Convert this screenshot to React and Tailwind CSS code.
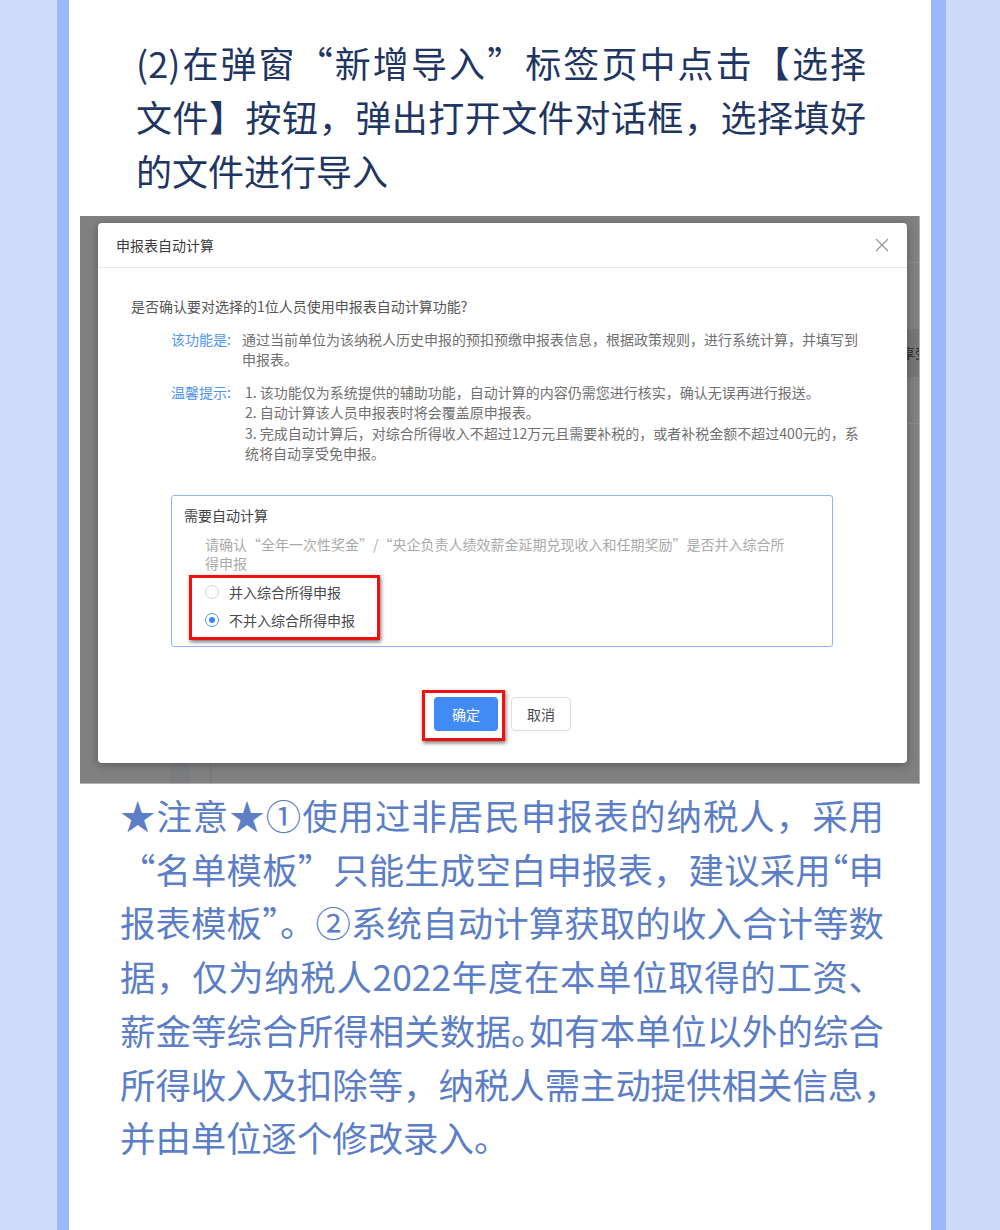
import React from "react";

const H = ({ children }) => (
  <span className="[font-feature-settings:'halt']">{children}</span>
);

const JLine = ({ children }) => (
  <div className="whitespace-nowrap text-justify [text-align-last:justify]">{children}</div>
);
const LLine = ({ children }) => <div className="whitespace-nowrap">{children}</div>;

function Radio({ checked, label }) {
  return (
    <div className="flex h-[28px] items-center">
      <span
        className={
          checked
            ? "flex h-[14px] w-[14px] items-center justify-center rounded-full border border-[#4a8ff5] bg-white"
            : "h-[14px] w-[14px] rounded-full border border-[#d4d4d4] bg-white"
        }
      >
        {checked && <span className="h-[6px] w-[6px] rounded-full bg-[#3f89f3]" />}
      </span>
      <span className="ml-[10px] text-[#4a4a4a]">{label}</span>
    </div>
  );
}

function Dialog() {
  return (
    <div className="relative w-[809px] rounded-[4px] bg-white text-[14px] leading-[20px] shadow-[0_2px_10px_rgba(0,0,0,0.3)]">
      <div className="flex h-[45px] items-center justify-between border-b border-[#e6e6e6] pl-[18px] pr-[18px]">
        <span className="text-[#3a3a3a]">申报表自动计算</span>
        <svg width="14" height="14" viewBox="0 0 14 14">
          <path d="M1 1L13 13M13 1L1 13" stroke="#9a9a9a" strokeWidth="1.3" fill="none" />
        </svg>
      </div>
      <div className="pb-[32px] pl-[33px] pt-[28px]">
        <div className="text-[#555]">是否确认要对选择的1位人员使用申报表自动计算功能?</div>
        <div className="mt-[13px] flex pl-[40px]">
          <div className="w-[71px] shrink-0 text-[#4d94ef]">该功能是:</div>
          <div className="text-[#707070]">
            <LLine>通过当前单位为该纳税人历史申报的预扣预缴申报表信息，根据政策规则，进行系统计算，并填写到</LLine>
            <LLine>申报表。</LLine>
          </div>
        </div>
        <div className="mt-[13px] flex pl-[40px]">
          <div className="w-[74px] shrink-0 text-[#4d94ef]">温馨提示:</div>
          <div className="leading-[20.3px] text-[#707070]">
            <LLine>1. 该功能仅为系统提供的辅助功能，自动计算的内容仍需您进行核实，确认无误再进行报送。</LLine>
            <LLine>2. 自动计算该人员申报表时将会覆盖原申报表。</LLine>
            <LLine>3. 完成自动计算后，对综合所得收入不超过12万元且需要补税的，或者补税金额不超过400元的，系</LLine>
            <LLine>统将自动享受免申报。</LLine>
          </div>
        </div>
        <div className="relative ml-[40px] mt-[32px] h-[152px] w-[662px] rounded-[3px] border border-[#8db6f3] pl-[12px] pt-[9px]">
          <div className="text-[#444]">需要自动计算</div>
          <div className="ml-[21px] mt-[9.5px] leading-[19px] text-[#aaaaaa]">
            <LLine>请确认“全年一次性奖金”/“央企负责人绩效薪金延期兑现收入和任期奖励”是否并入综合所</LLine>
            <LLine>得申报</LLine>
          </div>
          <div className="ml-[21px] mt-[5.5px]">
            <Radio checked={false} label="并入综合所得申报" />
            <Radio checked label="不并入综合所得申报" />
          </div>
          <div className="absolute left-[17px] top-[79px] h-[65px] w-[191px] border-[3px] border-[#f01010] shadow-[1px_2px_4px_rgba(0,0,0,0.55)]" />
        </div>
        <div className="mt-[50px] flex justify-center gap-[13px] pr-[33px]">
          <div className="relative">
            <div className="flex h-[34px] w-[64px] items-center justify-center rounded-[4px] bg-[#428bf5] text-white">
              确定
            </div>
            <div className="absolute left-[-12px] top-[-7px] h-[51px] w-[83px] border-[3px] border-[#f01010] shadow-[1px_2px_4px_rgba(0,0,0,0.55)]" />
          </div>
          <div className="flex h-[34px] w-[60px] items-center justify-center rounded-[4px] border border-[#dcdcdc] bg-white text-[#4a4a4a]">
            取消
          </div>
        </div>
      </div>
    </div>
  );
}

function Screenshot() {
  return (
    <div className="relative ml-[11px] mt-[19px] h-[568px] w-[840px] shrink-0 overflow-hidden border-b border-r border-[#b0b0b0] bg-[#808080] pl-[18px] pt-[7px]">
      <div className="absolute left-[827px] top-[46px] h-px w-[13px] bg-[#8c8c8c]" />
      <div className="absolute left-[827px] top-[113px] h-[48px] w-[13px] bg-[#767676]" />
      <div className="absolute left-[822px] top-[130px] whitespace-nowrap text-[13px] leading-[14px] text-[#2a2a2a]">享受</div>
      <div className="absolute left-[827px] top-[207px] h-px w-[13px] bg-[#8c8c8c]" />
      <div className="absolute left-[90px] top-[540px] h-[30px] w-[20px] bg-[#7b7d80]" />
      <div className="absolute left-[130px] top-[540px] h-[30px] w-px bg-[#777]" />
      <div className="relative">
        <Dialog />
      </div>
    </div>
  );
}

export default function App() {
  return (
    <div className="flex h-[1230px] w-[1000px] overflow-hidden bg-[#cddbf9] font-['Noto_Sans_CJK_SC','Noto_Sans',sans-serif]">
      <div className="w-[57px] shrink-0 bg-[#cfdcf9]" />
      <div className="w-[12px] shrink-0 bg-[#9bb8fb]" />
      <main className="flex w-[862px] shrink-0 flex-col bg-white">
        <div className="w-[797px] pl-[67px] pt-[35px] text-[36px] leading-[54px] text-[#1f3663]">
          <JLine>(2)在弹窗“新增导入”标签页中点击【选择</JLine>
          <JLine>文件】按钮，弹出打开文件对话框，选择填好</JLine>
          <LLine>的文件进行导入</LLine>
        </div>
        <Screenshot />
        <div className="ml-[51px] mt-[4px] w-[764px] text-[35.4px] leading-[53.7px] text-[#5b7ec6]">
          <JLine>★注意★①使用过非居民申报表的纳税人，采用</JLine>
          <JLine>“名单模板”只能生成空白申报表，建议采用<H>“</H>申</JLine>
          <JLine>报表模板”。②系统自动计算获取的收入合计等数</JLine>
          <JLine>据，仅为纳税人2022年度在本单位取得的工资、</JLine>
          <JLine>薪金等综合所得相关数据<H>。</H>如有本单位以外的综合</JLine>
          <LLine>所得收入及扣除等，纳税人需主动提供相关信息，</LLine>
          <LLine>并由单位逐个修改录入。</LLine>
        </div>
      </main>
      <div className="w-[15px] shrink-0 bg-[#9bb8fb]" />
      <div className="flex-1 bg-[#cddbf9]" />
    </div>
  );
}
